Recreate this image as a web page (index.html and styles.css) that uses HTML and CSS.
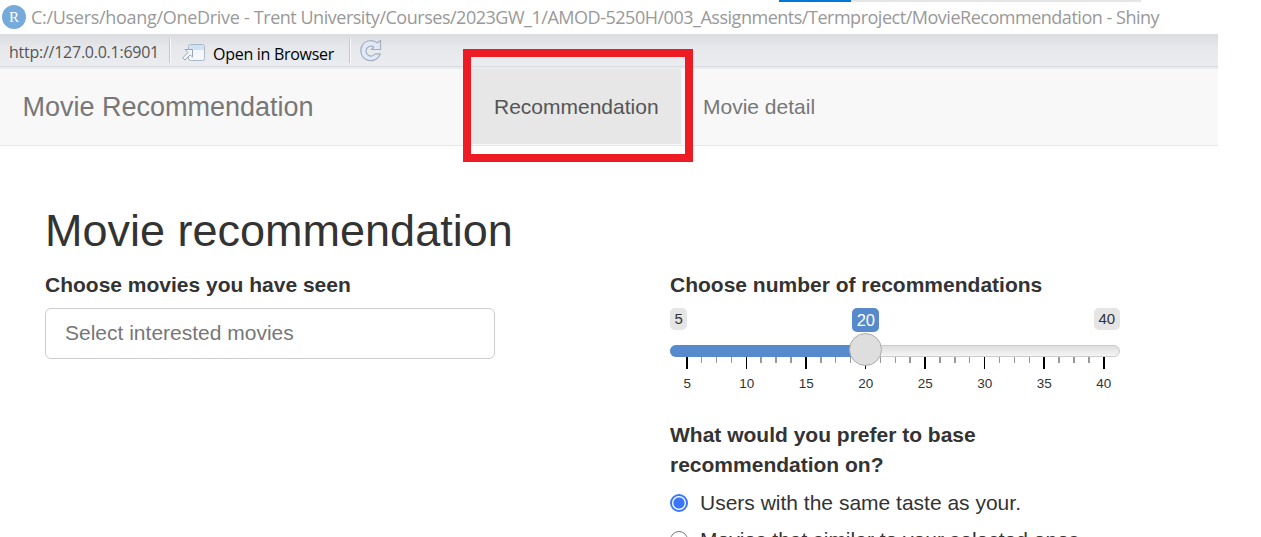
FILE: index.html
```
<!DOCTYPE html>
<html lang="en">
<head>
<meta charset="utf-8">
<title>Movie Recommendation</title>
<link rel="stylesheet" href="styles.css">
</head>
<body>
<div class="window">
  <div class="progress"><div class="progress-fill"></div></div>
  <header class="titlebar">
    <svg class="app-icon" width="24" height="24" viewBox="0 0 24 24"><circle cx="12" cy="12" r="12" fill="#75aadb"/><text class="app-letter" x="12" y="17" text-anchor="middle">R</text></svg>
    <span class="title"><span class="title-start">C:/Users/hoang/OneDrive - </span>Trent University/Courses/2023GW_1/AMOD-5250H/003_Assignments/Termproject/MovieRecommendation - Shiny</span>
  </header>
  <div class="toolbar">
    <span class="address">http://127.0.0.1:6901</span>
    <span class="divider"></span>
    <svg class="open-icon" width="24" height="18" viewBox="0 0 24 18">
      <rect x="6.500" y=".5" width="16" height="16" rx="2" fill="#f4f7fb" stroke="#a9b7c6"/>
      <rect x="7" y="1" width="15" height="5" rx="1" fill="#cfe3f7"/>
      <path d="M3 5.500H10.500V13L8.200 10.800 3 16 .8 13.800 6 8.500Z" fill="#f3f5f8" stroke="#99a5b2"/>
    </svg>
    <span class="open-label">Open in Browser</span>
    <span class="divider second"></span>
    <svg class="reload" width="24" height="24" viewBox="0 0 24 24">
      <path d="M18.300 4L21.500 1.500V10.500H12.500L14.800 8A5 5 0 1 0 16.200 14.800H21.300A10 10 0 1 1 18.300 4Z" fill="#e2e9f8" stroke="#a3b0c0" stroke-width="1.200" stroke-linejoin="round"/>
    </svg>
  </div>
  <nav class="navbar">
    <span class="brand">Movie Recommendation</span>
    <span class="tab active">Recommendation</span>
    <span class="tab detail">Movie detail</span>
    <div class="highlight"></div>
  </nav>
  <main class="content">
    <h2 class="heading">Movie recommendation</h2>
    <div class="columns">
      <section class="left">
        <label class="label seen">Choose movies you have seen</label>
        <div class="select">Select interested movies</div>
      </section>
      <section class="right">
        <label class="label count">Choose number of recommendations</label>
        <div class="slider">
          <div class="values"><span class="limit">5</span><span class="current">20</span><span class="limit">40</span></div>
          <div class="track"><div class="fill"></div><div class="handle"></div></div>
          <svg class="ticks" width="450" height="12" viewBox="0 0 450 12" shape-rendering="crispEdges">
            <path d="M31.5 0V6M46.5 0V6M61.5 0V6M91 0V6M106 0V6M121 0V6M151 0V6M165.500 0V6M180.500 0V6M210.500 0V6M225.500 0V6M240 0V6M270 0V6M285 0V6M299.500 0V6M329.500 0V6M344.500 0V6M359.500 0V6M389 0V6M404 0V6M419 0V6" stroke="#999" stroke-width="1.3"/>
            <path d="M17 0V12M76.500 0V12M136 0V12M195.500 0V12M255 0V12M314.500 0V12M374 0V12M434 0V12" stroke="#000" stroke-width="1.7"/>
          </svg>
          <div class="scale"><span>5</span><span>10</span><span>15</span><span>20</span><span>25</span><span>30</span><span>35</span><span>40</span></div>
        </div>
        <p class="label question">What would you prefer to base<br>recommendation on?</p>
        <div class="option"><span class="radio checked"></span><span>Users with the same taste as your.</span></div>
        <div class="option"><span class="radio"></span><span>Movies that similar to your selected ones.</span></div>
      </section>
    </div>
  </main>
</div>
</body>
</html>
```
FILE: styles.css
```
* { box-sizing: border-box; }
body { margin: 0; background: #fff; font-family: "Liberation Sans", Arial, sans-serif; font-size: 21px; color: #333; }
.window { width: 1261px; height: 537px; overflow: hidden; }
.progress { width: 362px; height: 2px; margin-left: 779px; background: #e5e5e5; }
.progress-fill { width: 72px; height: 2px; background: #0078d7; }
.titlebar { height: 32px; display: flex; align-items: flex-start; padding: 3px 0 0 2px; font-family: "Open Sans", "Noto Sans", sans-serif; white-space: nowrap; }
.app-icon { flex: none; }
.app-letter { font: 15px "Liberation Serif", serif; fill: #fff; }
.title { margin-left: 5px; line-height: 24px; font-size: 18px; letter-spacing: -.48px; color: #999; }
.title-start { letter-spacing: -.3px; }
.toolbar { width: 1218px; height: 35px; display: flex; align-items: flex-start; padding-left: 9px; background: linear-gradient(#dadce0, #e6e8ec 14px, #ebecf0 32px, #d7dadf 32px, #d7dadf 33px, #ebecf0 33px); font-family: "Open Sans", "Noto Sans", sans-serif; white-space: nowrap; }
.address { width: 160px; margin-top: 6px; line-height: 24px; font-size: 16px; letter-spacing: -.25px; color: #555; }
.divider { width: 2px; height: 25px; margin-top: 4px; background: #c5c9ce; border-right: 1px solid #f8f8fa; }
.open-icon { margin: 10px 0 0 11px; }
.open-label { width: 136px; margin: 8px 0 0 7px; line-height: 24px; font-size: 16px; letter-spacing: -.28px; color: #000; }
.reload { margin: 5px 0 0 8px; }
.navbar { position: relative; width: 1218px; height: 77px; display: flex; background: #f8f8f8; border-bottom: 1px solid #e7e7e7; color: #777; line-height: 75px; white-space: nowrap; }
.brand { width: 448px; padding: 1px 0 0 22.500px; font-size: 27px; }
.tab { padding-left: 23px; }
.detail { padding-left: 22px; }
.active { width: 210px; height: 75px; margin-left: 23px; background: #e7e7e7; color: #555; }
.highlight { position: absolute; left: 463px; top: -20px; width: 230px; height: 113px; border: 8px solid #ed1c24; }
.content { padding: 58px 0 0 45px; }
.heading { margin: 0; height: 66px; line-height: 54px; font-size: 45px; font-weight: 400; white-space: nowrap; }
.columns { display: flex; }
.left { width: 625px; }
.right { width: 450px; }
.label { display: block; height: 38px; line-height: 30px; font-weight: 700; white-space: nowrap; }
.select { width: 450px; height: 51px; padding-left: 19px; border: 1px solid #ccc; border-radius: 6px; line-height: 48px; color: #777; }
.slider { height: 112px; }
.values { height: 37px; display: flex; justify-content: space-between; align-items: flex-start; }
.limit { height: 22px; padding: 0 4.500px; border-radius: 5px; background: #e5e5e5; font-size: 15px; line-height: 22px; }
.limit:last-child { width: 26px; }
.current { width: 27px; height: 24px; margin-left: 165px; margin-right: auto; border-radius: 5px; background: #568acc; color: #fff; font-size: 16.500px; line-height: 24px; text-align: center; }
.track { position: relative; height: 12px; border: 1px solid #ccc; border-radius: 6px; background: linear-gradient(#dedede, #f5f5f5); }
.fill { width: 195px; height: 12px; margin: -1px; border-radius: 6px 0 0 6px; background: #568acc; }
.handle { position: absolute; left: 178px; top: -13px; width: 33px; height: 33px; border: 1px solid #ababab; border-radius: 50%; background: #dedede; }
.ticks { display: block; }
.scale { width: 476px; margin-left: -12.500px; display: flex; font-size: 13.500px; line-height: 29px; }
.scale span { width: 59.500px; text-align: center; }
.question { height: 60px; margin: 0 0 8px; }
.option { height: 37px; display: flex; align-items: flex-start; line-height: 30px; white-space: nowrap; }
.radio { width: 18px; height: 18px; margin: 6px 12px 0 0; border: 1.500px solid #767676; border-radius: 50%; flex: none; }
.checked { border: 2px solid #3b76ff; background: radial-gradient(circle, #3b76ff 5.200px, #fff 6px); }
```
